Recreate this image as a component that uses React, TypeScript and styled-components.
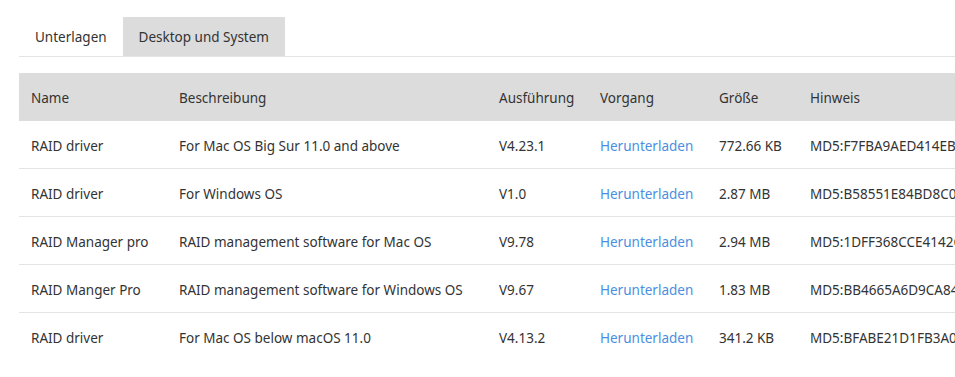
import styled, { createGlobalStyle } from 'styled-components';

const GlobalStyle = createGlobalStyle`
  html, body {
    margin: 0;
    padding: 0;
    background: #ffffff;
    overflow: hidden;
  }
  body {
    font-family: "Noto Sans", "Open Sans", sans-serif;
    color: #333333;
  }
`;

const Page = styled.div`
  width: 1180px;
  padding: 17px 0 0 19px;
`;

const TabBar = styled.div`
  display: flex;
  border-bottom: 1px solid #e4e4e4;
`;

const Tab = styled.div<{ $active?: boolean }>`
  height: 39px;
  line-height: 41px;
  padding: 0 16px;
  font-size: 13.5px;
  color: #333333;
  background: ${(p) => (p.$active ? '#dcdcdc' : 'transparent')};
  white-space: nowrap;
`;

const Table = styled.table`
  margin-top: 16px;
  width: 1161px;
  border-collapse: collapse;
  table-layout: fixed;
  font-size: 13.5px;
`;

const HeadRow = styled.tr`
  background: #dcdcdc;
`;

const Th = styled.th<{ $w: number }>`
  box-sizing: border-box;
  width: ${(p) => p.$w}px;
  height: 48px;
  padding: 2px 12px 0;
  text-align: left;
  font-weight: normal;
  color: #333333;
  white-space: nowrap;
`;

const Row = styled.tr<{ $last?: boolean }>`
  border-bottom: ${(p) => (p.$last ? 'none' : '1px solid #e4e4e4')};
`;

const Td = styled.td`
  height: 45px;
  padding: 2px 12px 0;
  white-space: nowrap;
  overflow: hidden;
  color: #333333;
`;

const Link = styled.a`
  color: #4a8fe2;
  text-decoration: none;
  cursor: pointer;
`;

const rows = [
  ['RAID driver', 'For Mac OS Big Sur 11.0 and above', 'V4.23.1', '772.66 KB', 'MD5:F7FBA9AED414EBC2D61A0E77B93F4C58'],
  ['RAID driver', 'For Windows OS', 'V1.0', '2.87 MB', 'MD5:B58551E84BD8C03A4F7E1D92C6A0B5E3'],
  ['RAID Manager pro', 'RAID management software for Mac OS', 'V9.78', '2.94 MB', 'MD5:1DFF368CCE4142C9B07A3E5D18F6C2A4'],
  ['RAID Manger Pro', 'RAID management software for Windows OS', 'V9.67', '1.83 MB', 'MD5:BB4665A6D9CA84F1E2073BD5C9A61E08'],
  ['RAID driver', 'For Mac OS below macOS 11.0', 'V4.13.2', '341.2 KB', 'MD5:BFABE21D1FB3A0E6C47D92B8F15A3C70'],
];

export default function App() {
  return (
    <>
      <GlobalStyle />
      <Page>
        <TabBar>
          <Tab>Unterlagen</Tab>
          <Tab $active>Desktop und System</Tab>
        </TabBar>
        <Table>
          <thead>
            <HeadRow>
              <Th $w={148}>Name</Th>
              <Th $w={320}>Beschreibung</Th>
              <Th $w={101}>Ausführung</Th>
              <Th $w={119}>Vorgang</Th>
              <Th $w={91}>Größe</Th>
              <Th $w={382}>Hinweis</Th>
            </HeadRow>
          </thead>
          <tbody>
            {rows.map((r, i) => (
              <Row key={i} $last={i === rows.length - 1}>
                <Td>{r[0]}</Td>
                <Td>{r[1]}</Td>
                <Td>{r[2]}</Td>
                <Td>
                  <Link>Herunterladen</Link>
                </Td>
                <Td>{r[3]}</Td>
                <Td>{r[4]}</Td>
              </Row>
            ))}
          </tbody>
        </Table>
      </Page>
    </>
  );
}
